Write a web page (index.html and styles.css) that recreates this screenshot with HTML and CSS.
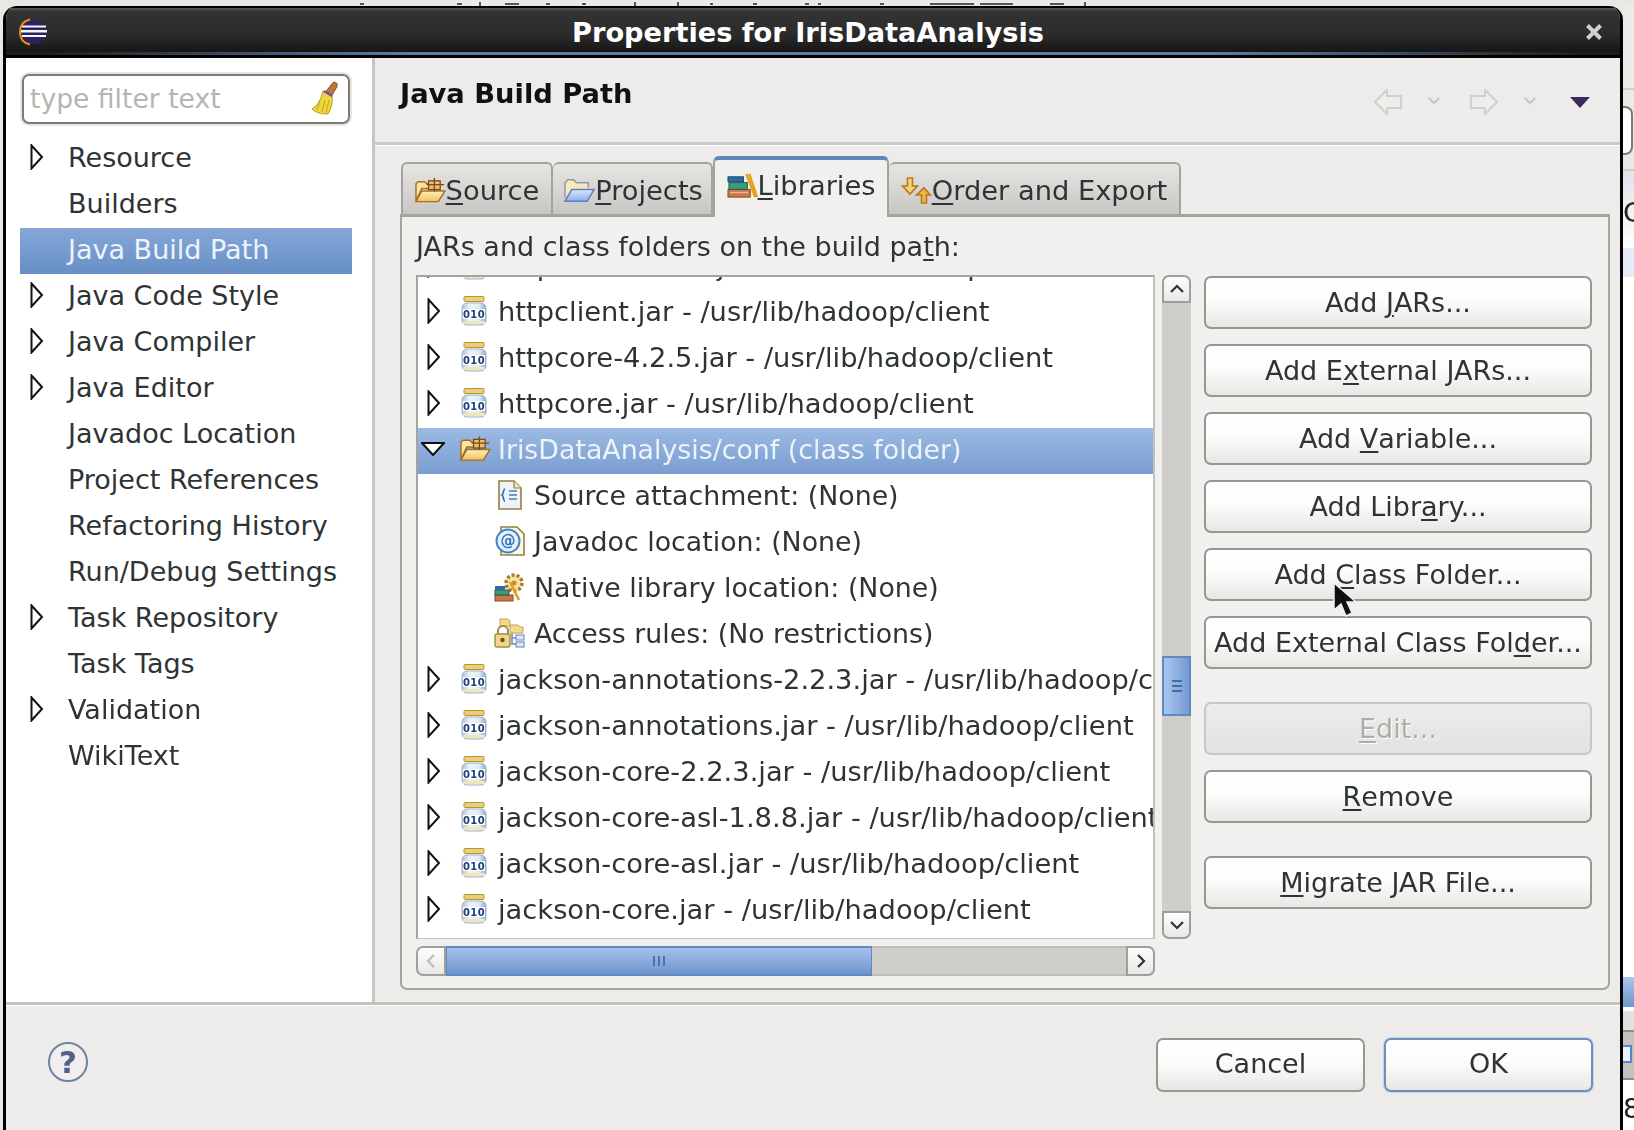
FILE: index.html
```html
<!DOCTYPE html>
<html lang="en">
<head>
<meta charset="utf-8">
<title>Properties for IrisDataAnalysis</title>
<link rel="stylesheet" href="styles.css">
</head>
<body>
<svg class="defs" width="0" height="0" aria-hidden="true">
  <defs>
    <linearGradient id="jarBody" x1="0" y1="0" x2="1" y2="0"><stop offset="0" stop-color="#a9bfdc"/><stop offset=".3" stop-color="#eef3fa"/><stop offset=".7" stop-color="#e4ecf7"/><stop offset="1" stop-color="#8fa9cc"/></linearGradient>
    <linearGradient id="folderFill" x1="0" y1="0" x2="0" y2="1"><stop offset="0" stop-color="#fff0b8"/><stop offset="1" stop-color="#f2c261"/></linearGradient>
    <linearGradient id="blueFolder" x1="0" y1="0" x2="0" y2="1"><stop offset="0" stop-color="#dbe8fb"/><stop offset="1" stop-color="#8db0ea"/></linearGradient>
    <symbol id="closed" viewBox="0 0 14 26"><polygon points="1.5,1.5 12,13 1.5,24.5" fill="#fff" stroke="#111" stroke-width="2"/></symbol>
    <symbol id="open" viewBox="0 0 24 14"><polygon points="1,1 23,1 12,13" fill="#fff" stroke="#111" stroke-width="2"/></symbol>
    <symbol id="jar" viewBox="0 0 26 30">
      <rect x="3" y="0.5" width="20" height="5" rx="1" fill="#e8cf7c" stroke="#b8962c"/>
      <rect x="1" y="7" width="24" height="22" rx="5" fill="url(#jarBody)" stroke="#9fb3cd"/>
      <rect x="2" y="25" width="22" height="3" fill="#f3e6b6"/>
      <rect x="2" y="13" width="22" height="10" fill="#fff"/>
      <text x="13" y="22" text-anchor="middle" class="jar-bits">010</text>
    </symbol>
    <symbol id="srcfolder" viewBox="0 0 32 26">
      <path d="M1 24V6l2-2h7l2 2h7v5H7L1 24z" fill="#fbe3a3" stroke="#a76f24" stroke-width="1.5"/>
      <path d="M1 24.5l6-11h24l-7 11z" fill="url(#folderFill)" stroke="#a76f24" stroke-width="1.5"/>
      <rect x="14" y="3" width="12" height="9" fill="#e9bf6f" stroke="#7a4a12" stroke-width="1.3"/>
      <path d="M20 0v14M12 7h18" stroke="#7a4a12" stroke-width="1.3" fill="none"/>
    </symbol>
    <symbol id="bluefolder" viewBox="0 0 32 26">
      <path d="M1 20V5l3-3h6l3 3h12v5" fill="#f8e8bd" stroke="#8d98ad" stroke-width="1.5"/>
      <path d="M1 24l7-12h23l-7 12z" fill="url(#blueFolder)" stroke="#5f7fb8" stroke-width="1.5"/>
    </symbol>
    <symbol id="books" viewBox="0 0 32 26">
      <rect x="1" y="17" width="23" height="8" fill="#c9764a" stroke="#8c4a22"/>
      <rect x="3" y="19.5" width="19" height="1.5" fill="#e8b38f"/>
      <rect x="2" y="10" width="19" height="7" fill="#3f9a78" stroke="#226048"/>
      <rect x="1" y="4" width="16" height="5" fill="#2c6ba6" stroke="#1d4a78"/>
      <path d="M20 1l9 24M23 1l8 24" stroke="#e2a21c" stroke-width="2.4" fill="none"/>
    </symbol>
    <symbol id="orderarrows" viewBox="0 0 30 27">
      <path d="M6 1h5v8h5l-7.500 8L1 9h5z" fill="#f4d27a" stroke="#b47a1c" stroke-width="1.600"/>
      <path d="M20 26h5v-8h4l-6.500-7-7.500 7h5z" fill="#eeb64b" stroke="#b47a1c" stroke-width="1.600"/>
    </symbol>
    <symbol id="sourcedoc" viewBox="0 0 24 30">
      <path d="M1 1h15l7 7v21H1z" fill="#eef3fb" stroke="#93803f" stroke-width="1.6"/>
      <path d="M16 1v7h7" fill="#f3e6b6" stroke="#93803f" stroke-width="1.2"/>
      <path d="M7 9c-2 0-1 5-3 6 2 1 1 6 3 6" fill="none" stroke="#2b6cb0" stroke-width="1.6"/>
      <path d="M11 11h8M11 15h8M11 19h8" stroke="#4b7fb8" stroke-width="1.6"/>
    </symbol>
    <symbol id="javadoc" viewBox="0 0 30 30">
      <path d="M6 1h16l7 7v21H6z" fill="#fdf8e4" stroke="#93803f" stroke-width="1.6"/>
      <circle cx="13" cy="15" r="11.5" fill="#e8f0fb" stroke="#3f86cc" stroke-width="2"/>
      <text x="13" y="20" text-anchor="middle" class="at-sign">@</text>
    </symbol>
    <symbol id="native" viewBox="0 0 32 30">
      <circle cx="20" cy="11" r="8" fill="#f7e3a8" stroke="#a67b2d" stroke-width="3.4" stroke-dasharray="3 2"/>
      <circle cx="20" cy="11" r="2.5" fill="#c98a2a"/>
      <path d="M16 10l9 18" stroke="#e2a21c" stroke-width="2.6"/>
      <rect x="1" y="23" width="18" height="6" fill="#c9764a" stroke="#8c4a22"/>
      <rect x="1" y="18" width="14" height="5" fill="#3f9a78" stroke="#226048"/>
      <rect x="1" y="14" width="10" height="4" fill="#2c6ba6"/>
    </symbol>
    <symbol id="access" viewBox="0 0 32 30">
      <path d="M6 1h8l2 2v5H6z" fill="#f5da8d" stroke="#c2a258"/>
      <path d="M16 7h8l2 2h3v6H16z" fill="#f5da8d" stroke="#c2a258"/>
      <path d="M18 15v11h4M18 20h4" stroke="#6d8fc0" stroke-width="1.6" fill="none"/>
      <rect x="22" y="17" width="8" height="5" fill="#dfe9f8" stroke="#5d83ba"/>
      <rect x="22" y="24" width="8" height="5" fill="#dfe9f8" stroke="#5d83ba"/>
      <path d="M4 16v-3a5 5 0 0 1 10 0v3" fill="none" stroke="#a58a45" stroke-width="2"/>
      <rect x="1" y="16" width="15" height="13" rx="2" fill="#f0d58a" stroke="#a58a45" stroke-width="1.4"/>
      <circle cx="8.5" cy="22" r="2.2" fill="#6b5318"/>
    </symbol>
  </defs>
</svg>

<div class="screen">
  <div class="top-strip">
    <svg class="specks" width="800" height="6" viewBox="0 0 800 6" aria-hidden="true">
      <path d="M60 4h4M157 4h5M180 2v4M205 4h14M246 4h4M282 4h4M335 2v4M378 2v4M410 4h3M453 4h4M505 4h4M518 4h3M580 4h4M630 4h18M640 4h34M680 4h33M750 4h14M785 2v4" stroke="#555" stroke-width="2"/>
    </svg>
  </div>
  <div class="desk">
    <section class="window">
      <header class="titlebar">
        <svg class="logo" width="28" height="28" viewBox="0 0 28 28" aria-hidden="true">
          <circle cx="15" cy="14" r="12" fill="#2c2261"/>
          <path d="M3 7.5h24v2H3zM2 12h26v2.4H2zM3 17h24v2H3z" fill="#f4f4fa"/>
          <path d="M11 1.5C4 3 1 8 1 14s3 11 10 12.5" fill="none" stroke="#f08a1d" stroke-width="2"/>
        </svg>
        <h1 class="title">Properties for IrisDataAnalysis</h1>
        <svg class="close" width="18" height="18" viewBox="0 0 18 18" aria-hidden="true">
          <path d="M2.5 2.5l13 13M15.500 2.500l-13 13" stroke="#d0d0cd" stroke-width="4"/>
        </svg>
      </header>

      <div class="body">
        <nav class="sidebar">
          <div class="filter">
            <span class="filter-text">type filter text</span>
            <svg class="broom" width="30" height="34" viewBox="0 0 30 34" aria-hidden="true">
              <path d="M22 1.500c3-1 5 1 4 4l-5 9-6-4z" fill="#b9793a" stroke="#8a5522"/>
              <path d="M12 10l9 5c1 6-1 13-4 18-6 0-12-1-16-5 5-3 9-9 11-18z" fill="#efd53f" stroke="#b79d1d"/>
              <path d="M13 10l8 5" stroke="#7d4f9b" stroke-width="2.500"/>
              <path d="M9 19l-3 10M14 19l-3 12M18 19l-3 13" stroke="#c2a51c" fill="none"/>
            </svg>
          </div>
          <ul class="nav">
            <li class="nav-row"><svg class="exp"><use href="#closed"/></svg>Resource</li>
            <li class="nav-row"><span class="exp"></span>Builders</li>
            <li class="nav-row selected"><span class="exp"></span>Java Build Path</li>
            <li class="nav-row"><svg class="exp"><use href="#closed"/></svg>Java Code Style</li>
            <li class="nav-row"><svg class="exp"><use href="#closed"/></svg>Java Compiler</li>
            <li class="nav-row"><svg class="exp"><use href="#closed"/></svg>Java Editor</li>
            <li class="nav-row"><span class="exp"></span>Javadoc Location</li>
            <li class="nav-row"><span class="exp"></span>Project References</li>
            <li class="nav-row"><span class="exp"></span>Refactoring History</li>
            <li class="nav-row"><span class="exp"></span>Run/Debug Settings</li>
            <li class="nav-row"><svg class="exp"><use href="#closed"/></svg>Task Repository</li>
            <li class="nav-row"><span class="exp"></span>Task Tags</li>
            <li class="nav-row"><svg class="exp"><use href="#closed"/></svg>Validation</li>
            <li class="nav-row"><span class="exp"></span>WikiText</li>
          </ul>
        </nav>

        <main class="content">
          <div class="page-head">
            <h2 class="page-title">Java Build Path</h2>
            <div class="page-tools">
              <svg class="tool-arrow" width="30" height="26" viewBox="0 0 30 26" aria-hidden="true"><path d="M14 1L2 13l12 12v-6h14V7H14z" fill="#eeedeb" stroke="#d0cfcc" stroke-width="2"/></svg>
              <svg class="tool-chev" width="14" height="8" viewBox="0 0 14 8" aria-hidden="true"><path d="M2 1l5 5 5-5" fill="none" stroke="#c6c5c2" stroke-width="2"/></svg>
              <svg class="tool-arrow" width="30" height="26" viewBox="0 0 30 26" aria-hidden="true"><path d="M16 1l12 12-12 12v-6H2V7h14z" fill="#eeedeb" stroke="#d0cfcc" stroke-width="2"/></svg>
              <svg class="tool-chev" width="14" height="8" viewBox="0 0 14 8" aria-hidden="true"><path d="M2 1l5 5 5-5" fill="none" stroke="#c6c5c2" stroke-width="2"/></svg>
              <svg class="tool-menu" width="20" height="11" viewBox="0 0 20 11" aria-hidden="true"><path d="M0 0h20L10 11z" fill="#3a2a5c"/></svg>
            </div>
          </div>

          <div class="page-body">
            <div class="tabs">
              <div class="tab tab-source"><svg class="tab-icon"><use href="#srcfolder"/></svg><span><u>S</u>ource</span></div>
              <div class="tab tab-projects"><svg class="tab-icon"><use href="#bluefolder"/></svg><span><u>P</u>rojects</span></div>
              <div class="tab tab-libs active"><svg class="tab-icon"><use href="#books"/></svg><span><u>L</u>ibraries</span></div>
              <div class="tab tab-order"><svg class="tab-icon"><use href="#orderarrows"/></svg><span><u>O</u>rder and Export</span></div>
            </div>
            <div class="folder">
              <p class="folder-label">JARs and class folders on the build pa<u>t</u>h:</p>
              <div class="folder-main">
                <div class="tree-col">
                  <div class="tree-wrap">
                    <ul class="tree">
                      <li class="row row-cut"><svg class="tri"><use href="#closed"/></svg><svg class="jar"><use href="#jar"/></svg>httpclient-4.2.5.jar - /usr/lib/hadoop/client</li>
                      <li class="row"><svg class="tri"><use href="#closed"/></svg><svg class="jar"><use href="#jar"/></svg>httpclient.jar - /usr/lib/hadoop/client</li>
                      <li class="row"><svg class="tri"><use href="#closed"/></svg><svg class="jar"><use href="#jar"/></svg>httpcore-4.2.5.jar - /usr/lib/hadoop/client</li>
                      <li class="row"><svg class="tri"><use href="#closed"/></svg><svg class="jar"><use href="#jar"/></svg>httpcore.jar - /usr/lib/hadoop/client</li>
                      <li class="row selected"><svg class="tri-open"><use href="#open"/></svg><svg class="fold"><use href="#srcfolder"/></svg>IrisDataAnalysis/conf (class folder)</li>
                      <li class="row child"><svg class="child-icon"><use href="#sourcedoc"/></svg>Source attachment: (None)</li>
                      <li class="row child"><svg class="child-icon"><use href="#javadoc"/></svg>Javadoc location: (None)</li>
                      <li class="row child"><svg class="child-icon"><use href="#native"/></svg>Native library location: (None)</li>
                      <li class="row child"><svg class="child-icon"><use href="#access"/></svg>Access rules: (No restrictions)</li>
                      <li class="row"><svg class="tri"><use href="#closed"/></svg><svg class="jar"><use href="#jar"/></svg>jackson-annotations-2.2.3.jar - /usr/lib/hadoop/client</li>
                      <li class="row"><svg class="tri"><use href="#closed"/></svg><svg class="jar"><use href="#jar"/></svg>jackson-annotations.jar - /usr/lib/hadoop/client</li>
                      <li class="row"><svg class="tri"><use href="#closed"/></svg><svg class="jar"><use href="#jar"/></svg>jackson-core-2.2.3.jar - /usr/lib/hadoop/client</li>
                      <li class="row"><svg class="tri"><use href="#closed"/></svg><svg class="jar"><use href="#jar"/></svg>jackson-core-asl-1.8.8.jar - /usr/lib/hadoop/client</li>
                      <li class="row"><svg class="tri"><use href="#closed"/></svg><svg class="jar"><use href="#jar"/></svg>jackson-core-asl.jar - /usr/lib/hadoop/client</li>
                      <li class="row"><svg class="tri"><use href="#closed"/></svg><svg class="jar"><use href="#jar"/></svg>jackson-core.jar - /usr/lib/hadoop/client</li>
                    </ul>
                    <div class="vscroll">
                      <div class="sb-btn sb-up"><svg width="16" height="10" viewBox="0 0 16 10"><path d="M2 8l6-6 6 6" fill="none" stroke="#333" stroke-width="2.200"/></svg></div>
                      <div class="v-track">
                        <div class="v-thumb"><svg width="12" height="14" viewBox="0 0 12 14"><path d="M1 2h10M1 7h10M1 12h10" stroke="#3f6ea8" stroke-width="1.800"/></svg></div>
                      </div>
                      <div class="sb-btn sb-down"><svg width="16" height="10" viewBox="0 0 16 10"><path d="M2 2l6 6 6-6" fill="none" stroke="#333" stroke-width="2.200"/></svg></div>
                    </div>
                  </div>
                  <div class="hscroll">
                    <div class="sb-btn sb-left"><svg width="10" height="16" viewBox="0 0 10 16"><path d="M8 2L2 8l6 6" fill="none" stroke="#bbb" stroke-width="2.200"/></svg></div>
                    <div class="h-thumb"><svg width="14" height="12" viewBox="0 0 14 12"><path d="M2 1v10M7 1v10M12 1v10" stroke="#3f6ea8" stroke-width="1.800"/></svg></div>
                    <div class="h-track"></div>
                    <div class="sb-btn sb-right"><svg width="10" height="16" viewBox="0 0 10 16"><path d="M2 2l6 6-6 6" fill="none" stroke="#333" stroke-width="2.200"/></svg></div>
                  </div>
                </div>
                <div class="actions">
                  <div class="btn">Add <u>J</u>ARs...</div>
                  <div class="btn">Add E<u>x</u>ternal JARs...</div>
                  <div class="btn">Add <u>V</u>ariable...</div>
                  <div class="btn">Add Libr<u>a</u>ry...</div>
                  <div class="btn">Add <u>C</u>lass Folder...</div>
                  <div class="btn">Add External Class Fol<u>d</u>er...</div>
                  <div class="btn disabled group-start"><u>E</u>dit...</div>
                  <div class="btn"><u>R</u>emove</div>
                  <div class="btn group-start"><u>M</u>igrate JAR File...</div>
                </div>
              </div>
            </div>
          </div>
        </main>
      </div>

      <footer class="footer">
        <svg class="help" width="42" height="42" viewBox="0 0 42 42" aria-hidden="true">
          <circle cx="21" cy="21" r="19" fill="#f0efed" stroke="#6f83a3" stroke-width="2"/>
          <text x="21" y="32" text-anchor="middle" class="help-mark">?</text>
        </svg>
        <div class="footer-btns">
          <div class="btn dlg">Cancel</div>
          <div class="btn dlg default">OK</div>
        </div>
      </footer>
    </section>

    <aside class="behind">
      <div class="bh bh-a"></div>
      <div class="bh bh-field"></div>
      <div class="bh bh-b"></div>
      <div class="bh bh-c"><span class="bh-letter">C</span></div>
      <div class="bh bh-sel"></div>
      <div class="bh bh-white"></div>
      <div class="bh bh-blue"></div>
      <div class="bh bh-d"></div>
      <div class="bh bh-bar"><span class="bh-doc"></span></div>
      <div class="bh bh-e"><span class="bh-letter">8</span></div>
    </aside>
  </div>

  <svg class="cursor" width="26" height="38" viewBox="0 0 26 38" aria-hidden="true">
    <path d="M2 2v27l7-6 5 12 6-3-5-11h9z" fill="#111" stroke="#eee" stroke-width="1.500"/>
  </svg>
</div>
</body>
</html>
```
FILE: styles.css
```css
* { box-sizing: border-box; }
html, body { margin: 0; padding: 0; }
body {
  width: 1634px;
  height: 1130px;
  overflow: hidden;
  background: #e9e8e5;
  font-family: "DejaVu Sans", sans-serif;
  font-size: 27.3px;
  color: #2e3436;
}
.defs { position: absolute; }
ul { list-style: none; margin: 0; padding: 0; }
h1, h2, p { margin: 0; font: inherit; }
u { text-decoration-thickness: 2px; text-underline-offset: 3px; }

.screen { position: relative; width: 1634px; height: 1130px; overflow: hidden; filter: blur(0.5px); }
.top-strip { height: 6px; padding-left: 300px; overflow: hidden; }
.specks { display: block; }
.desk { display: flex; height: 1124px; padding-left: 3px; }

.window {
  width: 1620px;
  display: flex;
  flex-direction: column;
  border-left: 3px solid #000;
  border-right: 3px solid #000;
  background: #edecea;
  border-radius: 14px 14px 0 0;
  overflow: hidden;
}

.titlebar {
  height: 52px;
  flex: none;
  display: flex;
  align-items: center;
  justify-content: space-between;
  padding: 0 17px 0 13px;
  background:
    linear-gradient(90deg, #1c1c1c 2%, #5c7da3 25%, #5c7da3 75%, #1c1c1c 98%) 0 46px / 100% 3px no-repeat,
    linear-gradient(#000 0, #000 3px) 0 49px / 100% 3px no-repeat,
    linear-gradient(#000 2px, #555 2px, #4a4a4a 4px, #333 5px, #2c2c2c 28px, #161616 46px);
}
.title {
  color: #fff;
  font-weight: 700;
  font-size: 27.2px;
  margin-right: 16px;
}

.body { flex: 1; display: flex; min-height: 0; }

.sidebar {
  width: 369px;
  flex: none;
  background: #fff;
  border-right: 3px solid #c7c6c1;
  padding: 14px 0 0 14px;
}
.filter {
  width: 328px;
  height: 50px;
  margin: 2px;
  padding: 0 7px 2px 6px;
  display: flex;
  align-items: center;
  justify-content: space-between;
  border: 2px solid #7d7a75;
  border-radius: 7px;
  box-shadow: 0 0 0 2px #e8e6e2;
  color: #b7b5b0;
  font-size: 26.6px;
}
.nav { margin-top: 12px; width: 332px; font-size: 27px; }
.nav-row {
  height: 46px;
  display: flex;
  align-items: center;
  white-space: nowrap;
  padding: 0 0 4px 10px;
}
.exp { width: 14px; height: 26px; margin-right: 24px; flex: none; }
.nav-row.selected { background: linear-gradient(#85a7d7, #6790c6); color: #eef3fb; }

.content { flex: 1; min-width: 0; display: flex; flex-direction: column; }
.page-head {
  height: 87px;
  flex: none;
  display: flex;
  justify-content: space-between;
  padding: 18px 30px 0 25px;
  border-bottom: 3px solid #cbcac6;
  box-shadow: 0 1px 0 #fff;
}
.page-title { font-weight: 700; line-height: 36px; color: #111; }
.page-tools { display: flex; align-items: flex-start; padding-top: 13px; }
.tool-chev { margin: 8px 28px 0 24px; }
.tool-menu { margin: 8px 0 0 5px; }

.page-body { flex: 1; min-height: 0; padding: 11px 10px 12px 25px; display: flex; flex-direction: column; }
.tabs { display: flex; align-items: flex-end; height: 58px; flex: none; padding-left: 1px; }
.tab {
  height: 52px;
  display: flex;
  align-items: center;
  justify-content: center;
  gap: 0;
  background: linear-gradient(#e6e5e2, #c8c7c3);
  border: 2px solid #a4a39f;
  border-left-width: 2px;
  border-bottom: 0;
  border-radius: 6px 6px 0 0;
  white-space: nowrap;
  padding-top: 2px;
}
.tab-source { width: 152px; }
.tab-projects { width: 160px; border-left: 0; padding-left: 3px; }
.tab-libs { width: 176px; }
.tab-order { width: 292px; border-left: 0; }
.tab.active {
  height: 61px;
  margin-bottom: -3px;
  position: relative;
  z-index: 1;
  background: #f1f0ee;
  border: 0 solid #a4a39f;
  border-width: 4px 2px 0;
  border-top-color: #5f86bb;
  padding: 0 0 6px;
}
.tab-icon { width: 31px; height: 27px; flex: none; }

.folder {
  flex: 1;
  min-height: 0;
  background: #f1f0ee;
  border: 2px solid #a5a49f;
  border-top-width: 3px;
  border-radius: 0 0 7px 7px;
  padding: 0 16px 0 14px;
  display: flex;
  flex-direction: column;
}
.folder-label { height: 58px; line-height: 60px; flex: none; font-size: 27px; }
.folder-main { display: flex; gap: 13px; }
.tree-col { width: 775px; flex: none; }
.tree-wrap { display: flex; gap: 7px; height: 664px; }

.tree {
  width: 739px;
  flex: none;
  background: #fff;
  border: 2px solid #a5a49f;
  border-right-color: #c2c1bc;
  border-bottom-color: #c2c1bc;
  overflow: hidden;
  border-bottom-width: 1px;
}
.row {
  height: 46px;
  display: flex;
  align-items: center;
  white-space: nowrap;
  padding: 0 0 4px 8px;
}
.row-cut { margin-top: -33px; }
.tri { width: 14px; height: 26px; flex: none; margin: 0 20px 0 1px; }
.jar { width: 26px; height: 30px; flex: none; margin-right: 11px; }
.tri-open { width: 24px; height: 14px; flex: none; margin: 0 15px 0 -5px; }
.fold { width: 31px; height: 26px; flex: none; margin-right: 7px; }
.row.selected { background: linear-gradient(#9bbae3, #7a9ed0); color: #eef3fb; font-size: 26.8px; }
.row.child { padding-left: 0; font-size: 26.8px; }
.child-icon { width: 32px; height: 30px; flex: none; margin: 0 8px 0 76px; }

.vscroll { width: 29px; flex: none; display: flex; flex-direction: column; }
.sb-btn {
  flex: none;
  display: flex;
  align-items: center;
  justify-content: center;
  background: linear-gradient(#fdfdfc, #e9e8e6);
  border: 2px solid #9f9e9a;
}
.sb-up { height: 28px; border-radius: 7px 7px 0 0; }
.sb-down { height: 28px; border-radius: 0 0 7px 7px; }
.v-track { flex: 1; background: #cfcecb; padding-top: 353px; }
.v-thumb {
  height: 60px;
  background: linear-gradient(90deg, #aac6ee, #749ad0);
  border: 2px solid #5e8abf;
  display: flex;
  align-items: center;
  justify-content: center;
}
.hscroll { display: flex; height: 30px; margin-top: 7px; width: 739px; }
.sb-left { width: 30px; border-radius: 7px 0 0 7px; }
.sb-right { width: 29px; border-radius: 0 7px 7px 0; }
.h-thumb {
  width: 426px;
  background: linear-gradient(#a4c1ea, #6f96cc);
  border: 2px solid #5e8abf;
  border-width: 2px 1px;
  display: flex;
  align-items: center;
  justify-content: center;
}
.h-track { flex: 1; background: #cfcecb; border-top: 2px solid #bdbcb8; border-bottom: 2px solid #bdbcb8; }

.actions { width: 388px; flex: none; padding-top: 1px; display: flex; flex-direction: column; gap: 15px; font-size: 27px; }
.btn {
  height: 53px;
  flex: none;
  display: flex;
  align-items: center;
  justify-content: center;
  white-space: pre;
  border: 2px solid #98978f;
  border-radius: 7px;
  background: linear-gradient(#fff, #fcfcfb 45%, #e8e7e5);
}
.btn u { text-underline-offset: 3px; }
.group-start { margin-top: 18px; }
.btn.disabled {
  color: #aeada9;
  text-shadow: 1px 1px 0 #fff;
  border-color: #c8c7c3;
  background: linear-gradient(#edecea, #e3e2e0);
}

.footer {
  flex: none;
  height: 128px;
  display: flex;
  justify-content: space-between;
  border-top: 3px solid #c3c2bb;
  box-shadow: inset 0 1px 0 #fff;
  padding: 33px 27px 0 41px;
}
.help { margin-top: 3px; }
.footer-btns { display: flex; gap: 19px; font-size: 27px; }
.btn.dlg { width: 209px; height: 54px; padding-bottom: 4px; }
.btn.default { border-color: #6d8fb9; box-shadow: 0 0 0 1px #c3d4e8; }

.jar-bits { font: 700 10px "DejaVu Sans", sans-serif; fill: #1d3f7a; letter-spacing: .3px; }
.at-sign { font: 700 15px "DejaVu Sans", sans-serif; fill: #2c74bd; }
.help-mark { font: 700 31px "DejaVu Sans", sans-serif; fill: #4f6488; }

.behind { flex: 1; min-width: 0; display: flex; flex-direction: column; overflow: hidden; }
.bh { flex: none; }
.bh-a { height: 100px; border-bottom: 0; background: linear-gradient(#ecebe8 82px, #cfcec9 82px, #cfcec9 84px, #ecebe8 84px); }
.bh-field { height: 49px; background: #fff; border: 2px solid #7d7a75; border-left: 0; border-radius: 0 8px 8px 0; margin-right: 1px; }
.bh-b { height: 16px; border-bottom: 2px solid #cfcec9; background: #e9e8e5; }
.bh-c { height: 77px; background: linear-gradient(#e1e2ea, #fff); overflow: hidden; padding-top: 27px; }
.bh-letter { display: block; line-height: 30px; color: #222; }
.bh-sel { height: 29px; background: #e4ecf8; }
.bh-white { height: 700px; background: #fff; }
.bh-blue { height: 30px; background: linear-gradient(#a9c5ec, #7096cc); }
.bh-d { height: 23px; background: linear-gradient(#fff 4px, #e2e1df 4px); }
.bh-bar { height: 50px; background: #c4c2bd; border-top: 2px solid #8f8d88; border-bottom: 2px solid #8f8d88; padding-top: 13px; }
.bh-doc { display: block; width: 9px; height: 18px; background: #eef3fb; border: 2px solid #4f86cf; border-left: 0; }
.bh-e { flex: 1; background: #fff; padding-top: 14px; }

.cursor { position: absolute; left: 1332px; top: 581px; }
```
